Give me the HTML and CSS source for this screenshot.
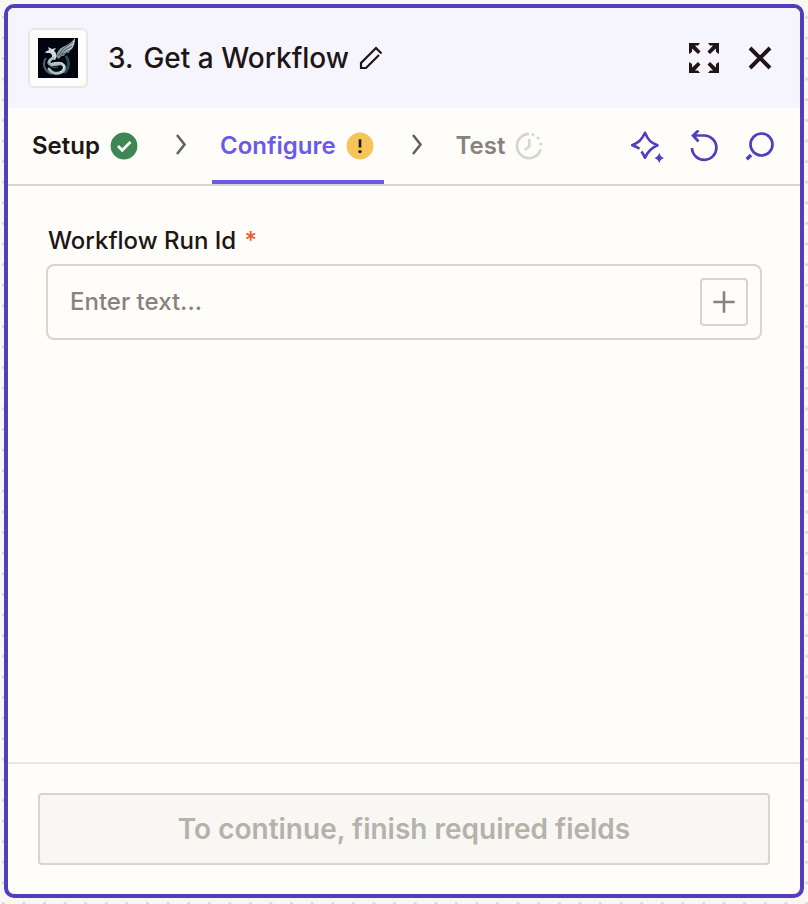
FILE: index.html
```html
<!DOCTYPE html>
<html lang="en">
<head>
<meta charset="utf-8">
<meta name="viewport" content="width=device-width, initial-scale=1">
<title>Get a Workflow</title>
<link rel="stylesheet" href="styles.css">
</head>
<body>
<main class="panel">
  <header class="header">
    <div class="app-badge">
      <svg class="app-logo" viewBox="0 0 40 40" aria-hidden="true">
        <defs>
          <linearGradient id="silver" x1="0" y1="1" x2="1" y2="0">
            <stop offset="0" stop-color="#6f8b91"/>
            <stop offset="1" stop-color="#c3d0d2"/>
          </linearGradient>
        </defs>
        <rect width="40" height="40" fill="#02040f"/>
        <path d="M8 20C4 26 6 33 14 36" fill="none" stroke="#48656a" stroke-width="2"/>
        <path d="M28 18C32 24 31 31 26 35" fill="none" stroke="#2f464c" stroke-width="3"/>
        <path d="M18 19C19 13 22 10 27 8C31 6 34 4 37 0C37 4 36 8 34 11C32 12 31 13 31 15C28 14 27 16 26 18C24 17 22 19 21 21Z" fill="url(#silver)"/>
        <path d="M20 18L25 11L35 4M22 18L27 12L34 8M24 17L31 13" stroke="#314b53" stroke-width="0.800" fill="none"/>
        <path d="M7 14L11 12L10 9L14 11L18 10L16 13C19 15 19 19 17 22L13 21C15 18 14 16 12 15L8 15Z" fill="#cfdada"/>
        <path d="M15 20C11 22 10 25 12 26C15 28 20 25 24 26C28 28 27 34 21 35C17 36 13 34 11 31" fill="none" stroke="#a9bdc0" stroke-width="3" stroke-linecap="round"/>
        <path d="M14 25C18 25 22 23 25 26C27 28 26 32 22 34" fill="none" stroke="#edf3f2" stroke-width="1"/>
        <path d="M10 25C12 29 16 30 20 29" fill="none" stroke="#60797e" stroke-width="1"/>
      </svg>
    </div>
    <h1 class="title"><span>3.</span><span>Get a Workflow</span></h1>
    <button class="icon-button rename" type="button" aria-label="Rename step">
      <svg width="24" height="24" viewBox="0 0 24 24" fill="none" stroke="currentColor" stroke-width="2.200"><path d="M22.500 7.500L17 2L2 17V22H7L20 9"/></svg>
    </button>
    <div class="header-actions">
      <button class="icon-button" type="button" aria-label="Expand">
        <svg width="32" height="32" viewBox="0 0 32 32" fill="currentColor"><g id="arrow"><path d="M1 1H12L10 3.500H7L12.500 9.500L10 12L4 6.500V10L1 12Z"/></g><use href="#arrow" transform="matrix(-1 0 0 1 32 0)"/><use href="#arrow" transform="matrix(1 0 0 -1 0 32)"/><use href="#arrow" transform="matrix(-1 0 0 -1 32 32)"/></svg>
      </button>
      <button class="icon-button" type="button" aria-label="Close">
        <svg width="32" height="32" viewBox="0 0 32 32" fill="none" stroke="currentColor" stroke-width="4"><path d="M6 6L26 26M26 6L6 26"/></svg>
      </button>
    </div>
  </header>

  <nav class="toolbar" aria-label="Step progress">
    <button class="tab" type="button">Setup
      <svg width="32" height="32" viewBox="0 0 32 32" fill="none"><circle cx="16" cy="16" r="13.4" fill="#3f8655"/><path d="M10 16L14.200 20.200L22.500 12" stroke="#fffdf9" stroke-width="2.800"/></svg>
    </button>
    <svg class="chevron" width="64" height="32" viewBox="0 0 64 32" fill="none" aria-hidden="true"><path d="M29 5L36.500 14.500L29 24" stroke="#66615e" stroke-width="2.6"/></svg>
    <button class="tab current" type="button" aria-current="step">Configure
      <svg width="32" height="32" viewBox="0 0 32 32" fill="none"><circle cx="16" cy="16" r="13.400" fill="#f6c558"/><path d="M16 9.200V17.500" stroke="#201515" stroke-width="2.600"/><circle cx="16" cy="21.600" r="1.700" fill="#201515"/></svg>
    </button>
    <svg class="chevron" width="64" height="32" viewBox="0 0 64 32" fill="none" aria-hidden="true"><path d="M29 5L36.500 14.500L29 24" stroke="#66615e" stroke-width="2.6"/></svg>
    <button class="tab pending" type="button" disabled>Test
      <svg width="32" height="32" viewBox="0 0 32 32" fill="none" stroke="#d7d5cc" stroke-width="2.600"><path d="M16 3.900A12.100 12.100 0 1 0 27.600 19.500M16.200 9V16.500L11.500 20"/><g fill="#d7d5cc" stroke="none"><circle cx="20" cy="4.500" r="1.600"/><circle cx="25" cy="8" r="1.600"/><circle cx="27.800" cy="14" r="1.600"/></g></svg>
    </button>
    <div class="tools">
      <button class="icon-button" type="button" aria-label="Suggest with AI">
        <svg width="36" height="36" viewBox="-1 0 36 36" fill="none" stroke="currentColor" stroke-width="2.600" stroke-linejoin="round"><path d="M10.500 20.800C8 19 6 18.300 3.200 17.300C9 15 12.500 12.500 16 4.800C19 12 22 15 28.500 17.300C22.500 19.800 19 23 16 29.700C15 27.500 13.800 25.300 12.500 23.400"/><path d="M30.300 24.500C31.300 27.800 32 28.800 35 30C32 31.300 31.300 32.300 30.300 35.200C29.300 32.300 28.300 31.300 25.500 30C28.500 28.800 29.300 27.800 30.300 24.500Z" fill="currentColor" stroke="none"/></svg>
      </button>
      <button class="icon-button" type="button" aria-label="Reset">
        <svg width="32" height="32" viewBox="0 0 32 32" fill="none" stroke="currentColor" stroke-width="2.700"><path d="M4 18A12.200 12.200 0 1 0 16 5.500H5M10.500 0.500L5 5.500L10.500 11.500"/></svg>
      </button>
      <button class="icon-button" type="button" aria-label="Search">
        <svg width="32" height="32" viewBox="0 0 32 32" fill="none" stroke="currentColor" stroke-width="2.700"><circle cx="17.500" cy="14.500" r="11"/><path d="M7 25L2.800 29.300" stroke-width="3.400"/></svg>
      </button>
    </div>
  </nav>

  <form class="fields">
    <label class="label" for="run-id">Workflow Run Id <span class="required">*</span></label>
    <div class="field">
      <input class="input" id="run-id" type="text" placeholder="Enter text..." required>
      <button class="insert" type="button" aria-label="Insert data">
        <svg width="24" height="24" viewBox="0 0 24 24" fill="none" stroke="currentColor" stroke-width="2.600"><path d="M12 1.300V22.700M1.300 12H22.700"/></svg>
      </button>
    </div>
  </form>

  <footer class="footer">
    <button class="continue" type="button" disabled>To continue, finish required fields</button>
  </footer>
</main>
</body>
</html>
```
FILE: styles.css
```css
* { box-sizing: border-box; }

body {
  margin: 0;
  min-height: 100vh;
  padding: 4px 4px 6px;
  display: flex;
  color: #201515;
  font-family: Inter, "Liberation Sans", sans-serif;
  background-color: #f8f7f4;
  background-image: radial-gradient(circle, #d9d8d5 1px, transparent 2px);
  background-size: 2.55vw 2.28vh;
  background-position: -7px 7px;
}

button, input { font: inherit; color: inherit; }
button { margin: 0; padding: 0; border: 0; background: none; }
svg { display: block; flex: none; }

.panel {
  flex: 1;
  min-width: 0;
  display: flex;
  flex-direction: column;
  overflow: hidden;
  background: #fffdf9;
  border: 4px solid #503ebd;
  border-radius: 10px;
}

.icon-button {
  display: flex;
  align-items: center;
  justify-content: center;
}

.header {
  display: flex;
  align-items: center;
  height: 100px;
  padding: 0 24px 0 20px;
  background: #f6f5fd;
}

.app-badge {
  padding: 8px;
  background: #fffdf9;
  border: 2px solid #e8e7e4;
  border-radius: 6px;
}

.app-logo { width: 40px; height: 40px; }

.title {
  display: flex;
  gap: 10px;
  margin: 0 10px 0 20px;
  font-size: 28px;
  font-weight: 500;
  line-height: 40px;
  white-space: nowrap;
}

.header-actions {
  display: flex;
  gap: 24px;
  margin-left: auto;
}

.toolbar {
  display: flex;
  align-items: center;
  height: 78px;
  padding: 0 24px 0 16px;
  border-bottom: 2px solid #d7d5cc;
}

.tab {
  display: flex;
  align-items: center;
  gap: 8px;
  height: 76px;
  padding: 4px 8px 0;
  border-bottom: 4px solid transparent;
  font-size: 24px;
  font-weight: 600;
  line-height: 32px;
}

.current {
  color: #695be8;
  border-color: #695be8;
}

.pending { color: #88827e; }

.tools {
  display: flex;
  align-items: center;
  gap: 24px;
  margin-left: auto;
  color: #503ebd;
}

.fields {
  flex: 1;
  padding: 39px 38px;
}

.label {
  display: block;
  padding: 0 2px;
  font-size: 24px;
  font-weight: 500;
  line-height: 32px;
}

.required {
  margin-left: 2px;
  color: #f05a28;
}

.field {
  display: flex;
  align-items: center;
  gap: 12px;
  height: 76px;
  margin-top: 7px;
  padding: 0 12px 0 22px;
  border: 2px solid #d7d5cc;
  border-radius: 8px;
}

.input {
  flex: 1;
  min-width: 0;
  padding: 0;
  border: 0;
  outline: 0;
  background: none;
  font-size: 24px;
  font-weight: 500;
  line-height: 32px;
}

.input::placeholder {
  color: #88827e;
  opacity: 1;
}

.insert {
  display: flex;
  align-items: center;
  justify-content: center;
  width: 48px;
  height: 48px;
  color: #88827e;
  border: 2px solid #d7d5cc;
  border-radius: 4px;
}

.footer {
  padding: 29px 30px;
  border-top: 2px solid #e8e7e4;
}

.continue {
  display: block;
  width: 100%;
  height: 72px;
  color: #b5b2aa;
  background: #f8f7f4;
  border: 2px solid #d7d5cc;
  border-radius: 4px;
  font-size: 28px;
  font-weight: 600;
}
```
